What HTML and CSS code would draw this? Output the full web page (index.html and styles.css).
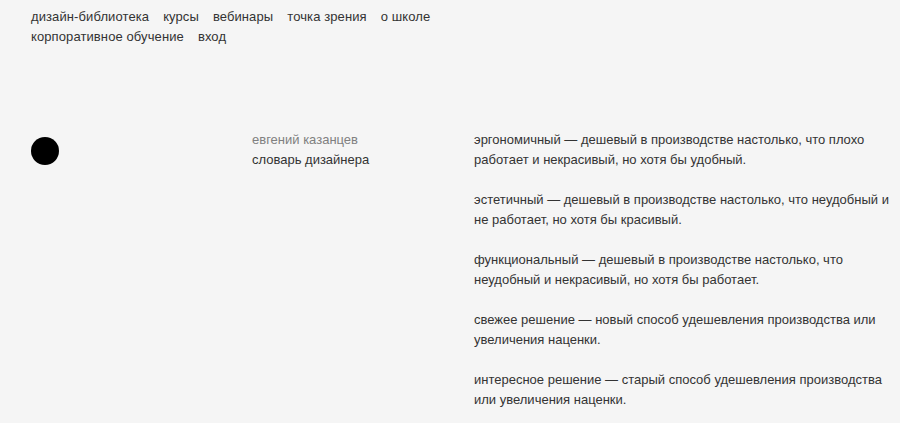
FILE: index.html
```html
<!DOCTYPE html>
<html lang="ru">
<head>
    <meta charset="UTF-8">
    <meta name="viewport" content="width=device-width, initial-scale=1.0">
    <title>словарь дизайнера</title>
    <link rel="stylesheet" href="styles.css">
</head>
<body>
    <div class="header">
        <nav class="menu">
            <a href="#">дизайн-библиотека</a>
            <a href="#">курсы</a>
            <a href="#">вебинары</a>
            <a href="#">точка зрения</a>
            <a href="#">о школе</a>
            <a href="#">корпоративное обучение</a>
            <a href="#">вход</a>
        </nav>
    </div>
    <div class="article">
        <div class="dot"></div>
        <div class="meta">
            <div class="author">евгений казанцев</div>
            <div class="title">словарь дизайнера</div>
        </div>
        <div class="text">
            <p>эргономичный — дешевый в производстве настолько, что плохо работает и некрасивый, но хотя бы удобный.</p>
            <p>эстетичный — дешевый в производстве настолько, что неудобный и не работает, но хотя бы красивый.</p>
            <p>функциональный — дешевый в производстве настолько, что неудобный и некрасивый, но хотя бы работает.</p>
            <p>свежее решение — новый способ удешевления производства или увеличения наценки.</p>
            <p>интересное решение — старый способ удешевления производства или увеличения наценки.</p>
        </div>
    </div>
</body>
</html>
```

FILE: styles.css
```css
body {
    background-color: #f5f5f5;
    font-family: "Liberation Sans", Arial, sans-serif;
    font-size: 13px;
    line-height: 20px;
    color: #333;
    margin: 0;
    padding: 0;
}

.header {
    padding: 7px 31px 0 31px;
}

.menu {
    display: flex;
    flex-wrap: wrap;
    column-gap: 14px;
    width: 430px;
    letter-spacing: 0.1px;
}

.menu a {
    color: #333;
    text-decoration: none;
}

.article {
    display: grid;
    grid-template-columns: 221px 222px 1fr;
    padding: 83px 2px 0 31px;
}

.dot {
    width: 28px;
    height: 28px;
    margin-top: 7px;
    border-radius: 50%;
    background-color: #000;
}

.author {
    color: #808080;
}

.title {
    color: #333;
}

.text p {
    margin: 0 0 20px 0;
}
```
